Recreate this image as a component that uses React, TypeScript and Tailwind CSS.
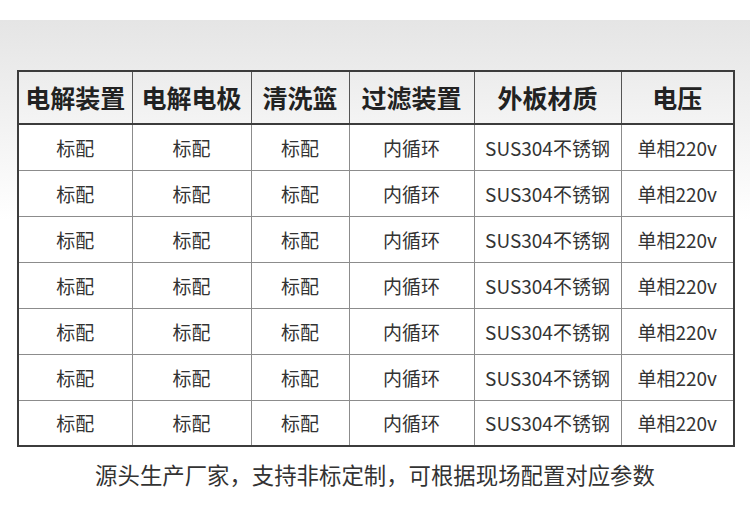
import React from "react";

const headers = ["电解装置", "电解电极", "清洗篮", "过滤装置", "外板材质", "电压"];
const widths = [114, 119, 98, 125, 147, 113];
const row = ["标配", "标配", "标配", "内循环", "SUS304不锈钢", "单相220v"];

export default function App() {
  return (
    <div
      className="w-[750px] h-[515px] bg-white overflow-hidden"
      style={{ fontFamily: '"Noto Sans CJK SC", "Noto Sans", sans-serif' }}
    >
      <div className="h-[20px] bg-white" />
      <div className="h-[495px] bg-[linear-gradient(to_bottom,#e5e5e5_0px,#f3f3f3_110px,#ffffff_200px,#ffffff_100%)] pt-[50px] pl-[17px]">
        <table className="border-collapse border-2 border-[#3c3c3c] table-fixed w-[716px]">
          <colgroup>
            {widths.map((w, i) => (
              <col key={i} style={{ width: w }} />
            ))}
          </colgroup>
          <thead>
            <tr className="h-[53px] bg-[linear-gradient(to_bottom,#ececec,#f4f4f4)]">
              {headers.map((h, i) => (
                <th
                  key={i}
                  className="border-l border-[#555] first:border-l-0 border-b-2 border-b-[#3c3c3c] text-[25px] font-bold text-[#222] text-center p-0 leading-none"
                >
                  {h}
                </th>
              ))}
            </tr>
          </thead>
          <tbody>
            {Array.from({ length: 7 }).map((_, r) => (
              <tr key={r} className="h-[46px] bg-white">
                {row.map((c, i) => (
                  <td
                    key={i}
                    className="border-l border-t border-[#8c8c8c] first:border-l-[#555] text-[19px] text-[#333] text-center p-0 leading-none"
                  >
                    {c}
                  </td>
                ))}
              </tr>
            ))}
          </tbody>
        </table>
        <div className="w-[716px] text-center mt-[16px] text-[22.4px] text-[#333] leading-none">
          源头生产厂家，支持非标定制，可根据现场配置对应参数
        </div>
      </div>
    </div>
  );
}
